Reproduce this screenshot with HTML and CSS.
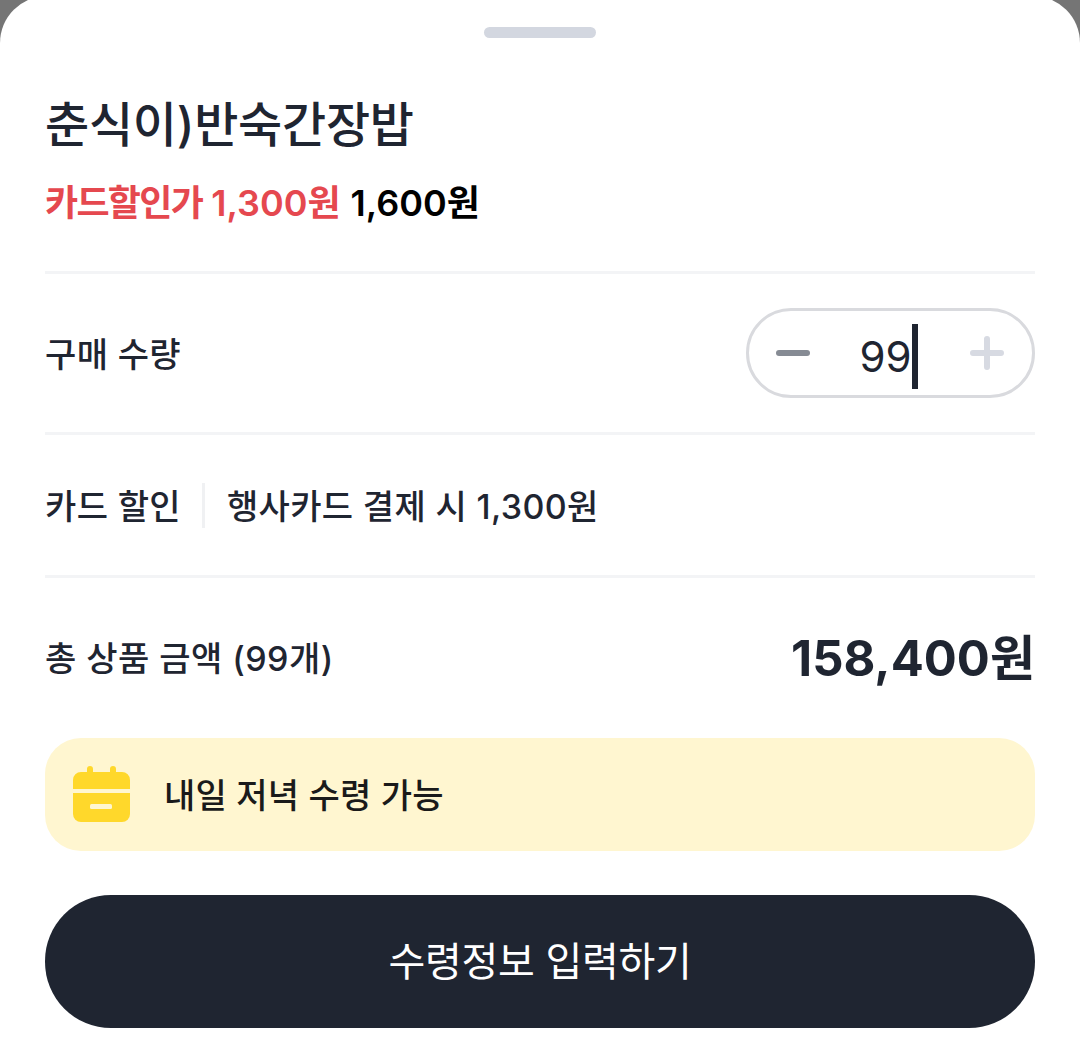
FILE: index.html
```html
<!DOCTYPE html>
<html lang="ko">
<head>
    <meta charset="UTF-8">
    <meta name="viewport" content="width=device-width, initial-scale=1.0">
    <title>수령정보 입력</title>
    <link rel="stylesheet" href="styles.css">
</head>
<body>
    <div class="sheet">
        <div class="handle"></div>

        <div class="product">
            <h1 class="product-name">춘식이)반숙간장밥</h1>
            <div class="product-price">
                <span class="price-sale"><span class="price-tag">카드할인가</span> 1,300원</span>
                <span class="price-normal">1,600원</span>
            </div>
        </div>

        <div class="row row-qty">
            <span class="row-label">구매 수량</span>
            <div class="stepper">
                <svg class="stepper-icon" viewBox="0 0 34 34"><path d="M3 17H31" stroke="#868b94" stroke-width="6" stroke-linecap="round"/></svg>
                <span class="stepper-value">99<span class="caret"></span></span>
                <svg class="stepper-icon" viewBox="0 0 34 34"><path d="M3 17H31M17 3V31" stroke="#d7dae2" stroke-width="6" stroke-linecap="round"/></svg>
            </div>
        </div>

        <div class="row row-card">
            <span class="row-label">카드 할인</span>
            <span class="card-sep"></span>
            <span class="row-label">행사카드 결제 시 1,300원</span>
        </div>

        <div class="row row-total">
            <span class="total-label">총 상품 금액 (99개)</span>
            <span class="total-price">158,400원</span>
        </div>

        <div class="notice">
            <svg class="notice-icon" viewBox="0 0 57 57">
                <path d="M14 3a3 3 0 0 1 6 0v3h17V3a3 3 0 0 1 6 0v3h6a8 8 0 0 1 8 8v9H0v-9a8 8 0 0 1 8-8h6z" fill="#ffd82b"/>
                <path d="M0 27h57v21a8 8 0 0 1-8 8H8a8 8 0 0 1-8-8z" fill="#ffd82b"/>
                <rect x="17" y="38" width="22" height="5" rx="1.5" fill="#fff6d0"/>
            </svg>
            <span class="notice-text">내일 저녁 수령 가능</span>
        </div>

        <button class="submit">수령정보 입력하기</button>
    </div>
</body>
</html>
```

FILE: styles.css
```css
* {
    box-sizing: border-box;
}
html, body {
    height: 100%;
    overflow: hidden;
}
body {
    margin: 0;
    background-color: #757575;
    font-family: Inter, "Noto Sans CJK KR", sans-serif;
    color: #1f2531;
}
.sheet {
    height: 1059px;
    margin-top: -4px;
    padding: 31px 45px 0;
    background-color: #fff;
    border-radius: 47px 47px 0 0;
}
.handle {
    width: 112px;
    height: 11px;
    margin: 0 auto;
    background-color: #d3d7e0;
    border-radius: 6px;
}
.product {
    height: 236px;
    padding-top: 55px;
    border-bottom: 3px solid #f3f4f6;
}
.product-name {
    margin: 0;
    font-size: 48px;
    line-height: 64px;
    font-weight: 500;
    letter-spacing: -0.25px;
}
.product-price {
    margin-top: 24px;
    font-size: 36px;
    line-height: 44px;
    font-weight: 600;
}
.price-sale {
    color: #e5484f;
}
.price-tag {
    letter-spacing: -1.7px;
}
.price-normal {
    margin-left: 1px;
    color: #000;
}
.row {
    display: flex;
    align-items: center;
}
.row-qty {
    justify-content: space-between;
    height: 161px;
    border-bottom: 3px solid #f3f4f6;
}
.row-label {
    padding-top: 4px;
    font-size: 34px;
    line-height: 44px;
    font-weight: 500;
    letter-spacing: 0.35px;
}
.stepper {
    display: flex;
    align-items: center;
    justify-content: space-between;
    width: 289px;
    height: 90px;
    padding: 0 28px 0 27px;
    border: 3px solid #d9dade;
    border-radius: 45px;
}
.stepper-icon {
    width: 34px;
    height: 34px;
}
.stepper-value {
    display: flex;
    align-items: center;
    margin: 6px 3px 0 0;
    font-size: 42px;
    line-height: 65px;
}
.caret {
    width: 6px;
    height: 65px;
    background-color: #1f2531;
}
.row-card {
    height: 143px;
    border-bottom: 3px solid #f3f4f6;
}
.card-sep {
    width: 3px;
    height: 45px;
    margin: 0 22px 0 21px;
    background-color: #f0f1f3;
}
.row-total {
    justify-content: space-between;
    height: 160px;
    padding-top: 2px;
}
.total-label {
    font-size: 34px;
    line-height: 44px;
    font-weight: 500;
    letter-spacing: 0.45px;
}
.total-price {
    font-size: 49px;
    line-height: 64px;
    font-weight: 700;
}
.notice {
    display: flex;
    align-items: center;
    gap: 34px;
    height: 113px;
    padding-left: 28px;
    background-color: #fff6d0;
    border-radius: 36px;
}
.notice-icon {
    width: 57px;
    height: 57px;
}
.notice-text {
    padding-top: 3px;
    font-size: 34px;
    line-height: 44px;
    font-weight: 500;
    letter-spacing: 0.2px;
    color: #1a1a1a;
}
.submit {
    display: block;
    width: 100%;
    height: 133px;
    margin-top: 44px;
    padding-bottom: 6px;
    border: none;
    border-radius: 66px;
    background-color: #1f2531;
    color: #fff;
    font-family: inherit;
    font-size: 40px;
    font-weight: 400;
    letter-spacing: -0.3px;
}
```
